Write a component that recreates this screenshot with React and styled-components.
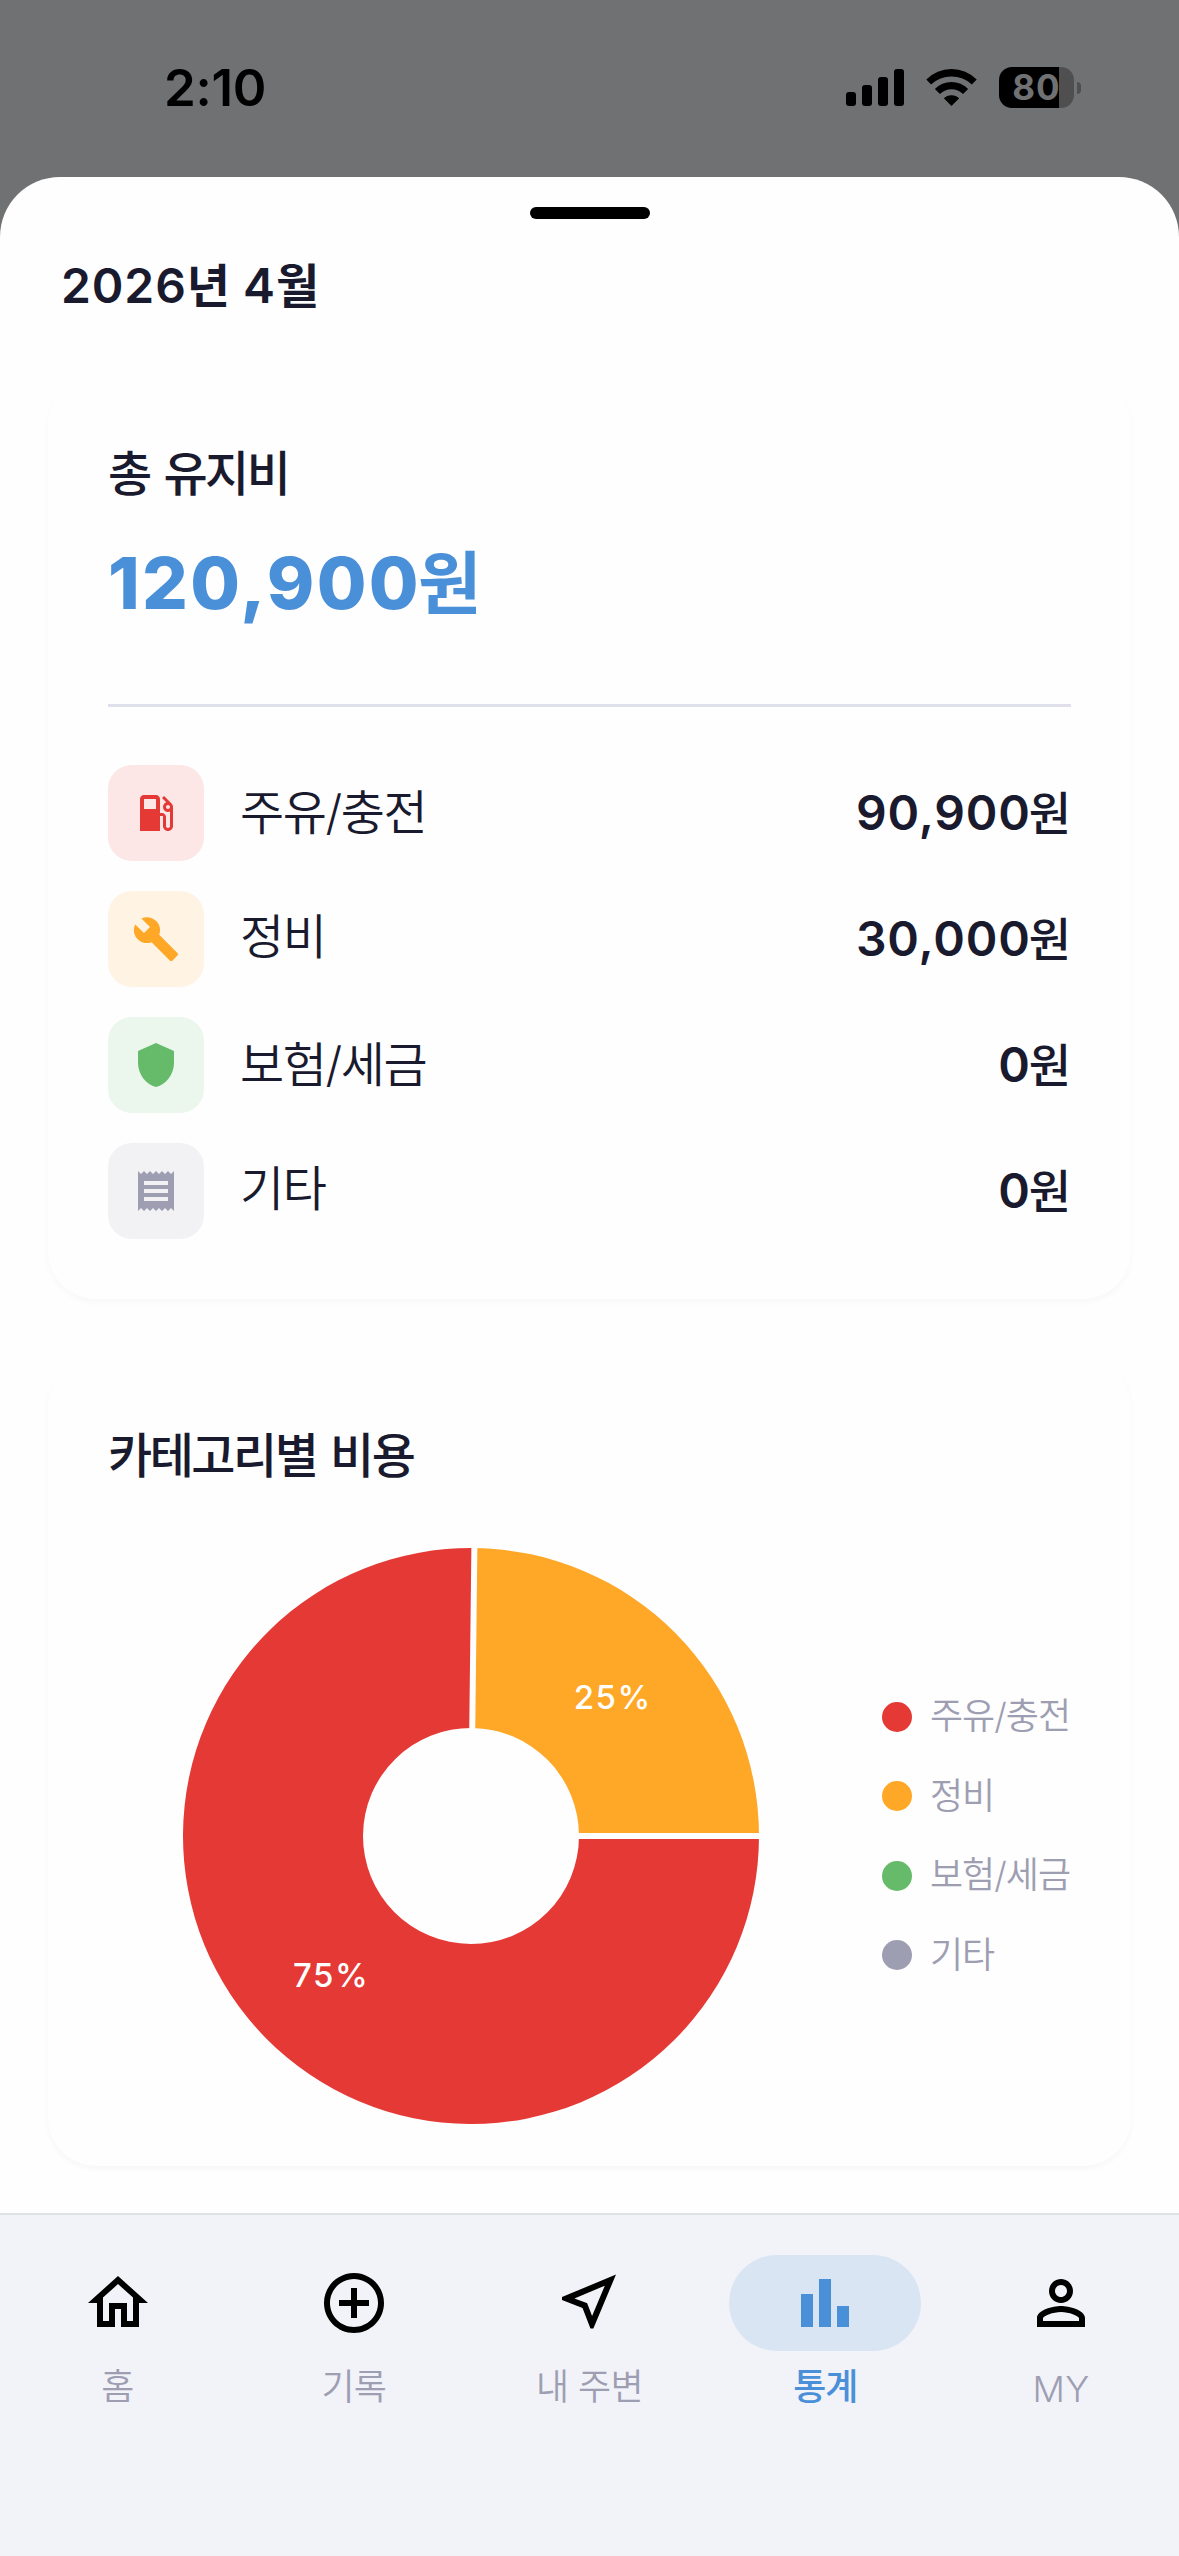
import React from 'react';
import styled, { createGlobalStyle } from 'styled-components';

const GlobalStyle = createGlobalStyle`
  *, *::before, *::after { box-sizing: border-box; }
  html, body { margin: 0; padding: 0; }
  body {
    font-family: Inter, "Noto Sans CJK KR", sans-serif;
    color: #1a1a2e;
    background: #707173;
  }
  svg { display: block; }
`;

const colors = {
  red: '#e53935',
  orange: '#ffa726',
  green: '#66bb6a',
  gray: '#9e9eb3',
  blue: '#4a90d9',
  surface: '#fefefe',
};

const Screen = styled.div`
  width: 1179px;
  height: 2556px;
  display: flex;
  flex-direction: column;
  background: #707173;
  overflow: hidden;
`;

/* ---------- status bar ---------- */

const StatusBar = styled.header`
  height: 177px;
  flex: none;
  display: flex;
  justify-content: space-between;
  align-items: flex-start;
  padding: 67px 98px 0 164px;
  color: #000;
`;

const Clock = styled.time`
  font-size: 51px;
  line-height: 42px;
  font-weight: 600;
  letter-spacing: -0.3px;
`;

const StatusIcons = styled.div`
  height: 41px;
  display: flex;
  align-items: center;
`;

const Signal = styled.div`
  display: flex;
  align-items: flex-end;
  gap: 6px;
  height: 37px;
  margin-right: 22px;
`;

const SignalBar = styled.span`
  width: 10px;
  height: ${(p) => p.$height}px;
  border-radius: 3px;
  background: #000;
`;

const Battery = styled.div`
  display: flex;
  align-items: center;
  gap: 3px;
  margin-left: 22px;
`;

const BatteryBody = styled.div`
  width: 75px;
  height: 41px;
  border-radius: 13px;
  background: linear-gradient(to right, #000 60px, #4f4f50 60px);
  display: flex;
  align-items: center;
  justify-content: center;
  color: #707173;
  font-size: 35px;
  line-height: 41px;
  font-weight: 700;
  letter-spacing: 1px;
`;

const BatteryCap = styled.span`
  width: 4px;
  height: 12px;
  border-radius: 0 4px 4px 0;
  background: #4f4f50;
`;

/* ---------- sheet ---------- */

const Sheet = styled.main`
  flex: 1;
  min-height: 0;
  display: flex;
  flex-direction: column;
  border-radius: 60px 60px 0 0;
  background: ${colors.surface};
  overflow: hidden;
`;

const Handle = styled.div`
  width: 120px;
  height: 12px;
  margin: 30px auto 0;
  flex: none;
  border-radius: 6px;
  background: #000;
`;

const MonthTitle = styled.h1`
  margin: 37px 0 61px 61px;
  font-size: 48px;
  line-height: 60px;
  font-weight: 600;
  letter-spacing: 0.9px;
`;

const Cards = styled.div`
  display: flex;
  flex-direction: column;
  gap: 60px;
  padding: 0 48px;
`;

const Card = styled.section`
  display: flex;
  flex-direction: column;
  padding: 67px 60px ${(p) => p.$bottom}px;
  border-radius: 48px;
  background: ${colors.surface};
  box-shadow: 0 3px 6px rgba(0, 0, 0, 0.03);
`;

const CardTitle = styled.h2`
  margin: 0;
  font-size: 48px;
  line-height: 60px;
  font-weight: 500;
  letter-spacing: -2.5px;
  word-spacing: 3.5px;
`;

const Total = styled.p`
  margin: 34px 0 0;
  font-size: 72px;
  line-height: 90px;
  font-weight: 800;
  letter-spacing: 2.3px;
  color: ${colors.blue};
`;

const Divider = styled.hr`
  width: 100%;
  height: 3px;
  margin: 76px 0 58px;
  border: 0;
  background: #e0e0ec;
`;

const Rows = styled.ul`
  margin: 0;
  padding: 0;
  list-style: none;
  display: flex;
  flex-direction: column;
  gap: 30px;
`;

const Row = styled.li`
  display: flex;
  align-items: center;
  height: 96px;
`;

const IconTile = styled.span`
  width: 96px;
  height: 96px;
  border-radius: 24px;
  display: flex;
  align-items: center;
  justify-content: center;
  color: ${(p) => p.$color};
  background: ${(p) => p.$bg};
`;

const RowLabel = styled.span`
  flex: 1;
  margin-left: 36px;
  padding-bottom: ${(p) => p.$raise}px;
  font-size: 48px;
  line-height: 60px;
  font-weight: 350;
  letter-spacing: -1.4px;
`;

const Amount = styled.span`
  font-size: 48px;
  line-height: 60px;
  font-weight: 600;
  letter-spacing: 0.8px;
`;

const Unit = styled.span`
  margin-left: ${(p) => p.$shift || 0}px;
  font-size: ${(p) => p.$size}px;
  line-height: 0;
  font-weight: ${(p) => p.$weight};
  letter-spacing: 0;
`;

/* ---------- chart ---------- */

const ChartArea = styled.div`
  display: flex;
  align-items: center;
  justify-content: space-between;
  margin-top: 62px;
  padding-left: 75px;
`;

const Legend = styled.ul`
  margin: 0;
  padding: 0;
  width: 189px;
  list-style: none;
  display: flex;
  flex-direction: column;
`;

const LegendItem = styled.li`
  display: flex;
  align-items: center;
  gap: 18px;
  height: 79.5px;
  white-space: nowrap;
  font-size: 36px;
  line-height: 45px;
  font-weight: 350;
  letter-spacing: -1px;
  color: ${colors.gray};
`;

const Dot = styled.span`
  width: 30px;
  height: 30px;
  flex: none;
  border-radius: 50%;
  background: ${(p) => p.$color};
`;

const SliceLabel = styled.text`
  font-size: 33px;
  font-weight: 500;
  letter-spacing: 1.6px;
  fill: #fff;
  text-anchor: middle;
`;

/* ---------- bottom navigation ---------- */

const NavBar = styled.nav`
  height: 343px;
  flex: none;
  display: grid;
  grid-template-columns: repeat(5, 1fr);
  padding-top: 40px;
  border-top: 2px solid #e0e1e4;
  background: #f2f3f8;
`;

const NavItem = styled.a`
  display: flex;
  flex-direction: column;
  align-items: center;
  gap: ${(p) => p.$gap || 14}px;
  font-size: 36px;
  line-height: 45px;
  letter-spacing: ${(p) => p.$spacing}px;
  font-weight: ${(p) => (p.$active ? 500 : p.$weight || 350)};
  color: ${(p) => (p.$active ? colors.blue : colors.gray)};
`;

const NavPill = styled.span`
  width: 192px;
  height: 96px;
  border-radius: 48px;
  display: flex;
  align-items: center;
  justify-content: center;
  color: ${(p) => (p.$active ? colors.blue : '#000')};
  background: ${(p) => (p.$active ? '#d9e5f3' : 'transparent')};
`;

const paths = {
  fuel: 'M19.77 7.23l.01-.01-3.72-3.72L15 4.56l2.11 2.11c-.94.36-1.61 1.26-1.61 2.33 0 1.38 1.12 2.5 2.5 2.5.36 0 .69-.08 1-.21v7.21c0 .55-.45 1-1 1s-1-.45-1-1V14c0-1.1-.9-2-2-2h-1V5c0-1.1-.9-2-2-2H6c-1.1 0-2 .9-2 2v16h10v-7.5h1.5v5c0 1.38 1.12 2.5 2.5 2.5s2.5-1.12 2.5-2.5V9c0-.69-.28-1.32-.73-1.77zM12 10H6V5h6v5zm6 0c-.55 0-1-.45-1-1s.45-1 1-1 1 .45 1 1-.45 1-1 1z',
  wrench: 'M22.7 19l-9.1-9.1c.9-2.3.4-5-1.5-6.9-2-2-5-2.4-7.4-1.3L9 6 6 9 1.6 4.7C.4 7.1.9 10.1 2.9 12.1c1.9 1.9 4.6 2.4 6.9 1.5l9.1 9.1c.4.4 1 .4 1.4 0l2.3-2.3c.5-.4.5-1.1.1-1.4z',
  shield: 'M12 1L3 5v6c0 5.55 3.84 10.74 9 12 5.16-1.26 9-6.45 9-12V5l-9-4z',
  receipt: 'M18 17H6v-2h12v2zm0-4H6v-2h12v2zm0-4H6V7h12v2zM3 22l1.5-1.5L6 22l1.5-1.5L9 22l1.5-1.5L12 22l1.5-1.5L15 22l1.5-1.5L18 22l1.5-1.5L21 22V2l-1.5 1.5L18 2l-1.5 1.5L15 2l-1.5 1.5L12 2l-1.5 1.5L9 2 7.5 3.5 6 2 4.5 3.5 3 2v20z',
  home: 'M12 5.69l5 4.5V18h-2v-6H9v6H7v-7.81l5-4.5M12 3L2 12h3v8h6v-6h2v6h6v-8h3L12 3z',
  add: 'M13 7h-2v4H7v2h4v4h2v-4h4v-2h-4V7zm-1-5C6.48 2 2 6.48 2 12s4.48 10 10 10 10-4.48 10-10S17.52 2 12 2zm0 18c-4.41 0-8-3.59-8-8s3.59-8 8-8 8 3.59 8 8-3.59 8-8 8z',
  near: 'M17.27 6.23l-4.24 10.13-1.32-3.42-.32-.83-.82-.32-3.43-1.33 10.13-4.23M21 2.5L3 10.03v.98l6.84 2.65L12.48 20.5h.98L21 2.5z',
  chart: 'M4 9h4v11H4zM10 4h4v16h-4zM16 13h4v7h-4z',
  person: 'M12 6c1.1 0 2 .9 2 2s-.9 2-2 2-2-.9-2-2 .9-2 2-2m0-2C9.79 4 8 5.79 8 8s1.79 4 4 4 4-1.79 4-4-1.79-4-4-4zm0 9c-2.67 0-8 1.34-8 4v3h16v-3c0-2.66-5.33-4-8-4zm6 5H6v-.99c.2-.72 3.3-2.01 6-2.01s5.8 1.29 6 2v1z',
};

const Icon = ({ name, size }) => (
  <svg width={size} height={size} viewBox="0 0 24 24" fill="currentColor" aria-hidden="true">
    <path d={paths[name]} />
  </svg>
);

const Wifi = () => (
  <svg width="51" height="37" viewBox="0 0 50 37" preserveAspectRatio="none" aria-hidden="true">
    <path d="M0.3 10.5A34.3 34.3 0 0 1 49.7 10.5L45 15.5A29 29 0 0 0 5 15.5Z" />
    <path d="M8.7 20A22.5 22.5 0 0 1 41.3 20L36.3 25A16 16 0 0 0 13.7 25Z" />
    <path d="M17.5 29.3A10.5 10.5 0 0 1 32.5 29.3L25 37Z" />
  </svg>
);

const categories = [
  { label: '주유/충전', icon: 'fuel', color: colors.red, bg: '#fce6e6', value: 90900, raise: 0 },
  { label: '정비', icon: 'wrench', color: colors.orange, bg: '#fff3e4', value: 30000, raise: 4 },
  { label: '보험/세금', icon: 'shield', color: colors.green, bg: '#ebf6ed', value: 0, raise: 0 },
  { label: '기타', icon: 'receipt', color: colors.gray, bg: '#f2f2f5', value: 0, raise: 4 },
];

const tabs = [
  { label: '홈', icon: 'home', spacing: 0 },
  { label: '기록', icon: 'add', spacing: -0.8 },
  { label: '내 주변', icon: 'near', spacing: -0.6 },
  { label: '통계', icon: 'chart', spacing: -1, active: true },
  { label: 'MY', icon: 'person', spacing: 0.3, gap: 16, weight: 300 },
];

const total = categories.reduce((sum, c) => sum + c.value, 0);

const CENTER = 288;
const OUTER = 288;
const INNER = 108;
const point = (r, a) => [CENTER + r * Math.cos(a), CENTER + r * Math.sin(a)];

function DonutChart() {
  let angle = 0;
  const slices = categories
    .filter((c) => c.value > 0)
    .map((c) => {
      const start = angle;
      angle += (c.value / total) * Math.PI * 2;
      return { ...c, start, end: angle, mid: (start + angle) / 2 };
    });

  return (
    <svg width="576" height="576" viewBox="0 0 576 576">
      {slices.map((s) => {
        const large = s.end - s.start > Math.PI ? 1 : 0;
        const d = [
          `M${point(OUTER, s.start)}`,
          `A${OUTER} ${OUTER} 0 ${large} 1 ${point(OUTER, s.end)}`,
          `L${point(INNER, s.end)}`,
          `A${INNER} ${INNER} 0 ${large} 0 ${point(INNER, s.start)}Z`,
        ].join('');
        return <path key={s.label} d={d} fill={s.color} />;
      })}
      {slices.map((s) => {
        const [x1, y1] = point(INNER - 2, s.start);
        const [x2, y2] = point(OUTER + 2, s.start);
        return (
          <line key={s.label} x1={x1} y1={y1} x2={x2} y2={y2} stroke={colors.surface} strokeWidth="6" />
        );
      })}
      {slices.map((s) => {
        const [x, y] = point((OUTER + INNER) / 2, s.mid);
        return (
          <SliceLabel key={s.label} x={x + 1} y={y + 12}>
            {Math.round((s.value / total) * 100)}%
          </SliceLabel>
        );
      })}
    </svg>
  );
}

export default function App() {
  return (
    <Screen>
      <GlobalStyle />
      <StatusBar>
        <Clock>2:10</Clock>
        <StatusIcons>
          <Signal>
            {[14, 21, 29, 37].map((h) => (
              <SignalBar key={h} $height={h} />
            ))}
          </Signal>
          <Wifi />
          <Battery>
            <BatteryBody>80</BatteryBody>
            <BatteryCap />
          </Battery>
        </StatusIcons>
      </StatusBar>

      <Sheet>
        <Handle />
        <MonthTitle>
          2026<Unit $weight={600} $size={47}>년</Unit> 4<Unit $weight={600} $size={47}>월</Unit>
        </MonthTitle>
        <Cards>
          <Card $bottom={60}>
            <CardTitle>총 유지비</CardTitle>
            <Total>
              {total.toLocaleString('en-US')}
              <Unit $weight={700} $size={69} $shift={-3}>원</Unit>
            </Total>
            <Divider />
            <Rows>
              {categories.map((c) => (
                <Row key={c.label}>
                  <IconTile $color={c.color} $bg={c.bg}>
                    <Icon name={c.icon} size={48} />
                  </IconTile>
                  <RowLabel $raise={c.raise}>{c.label}</RowLabel>
                  <Amount>
                    {c.value.toLocaleString('en-US')}
                    <Unit $weight={500} $size={46} $shift={-2}>원</Unit>
                  </Amount>
                </Row>
              ))}
            </Rows>
          </Card>

          <Card $bottom={42}>
            <CardTitle>카테고리별 비용</CardTitle>
            <ChartArea>
              <DonutChart />
              <Legend>
                {categories.map((c) => (
                  <LegendItem key={c.label}>
                    <Dot $color={c.color} />
                    {c.label}
                  </LegendItem>
                ))}
              </Legend>
            </ChartArea>
          </Card>
        </Cards>
      </Sheet>

      <NavBar>
        {tabs.map((t) => (
          <NavItem key={t.label} $active={t.active} $spacing={t.spacing} $gap={t.gap} $weight={t.weight}>
            <NavPill $active={t.active}>
              <Icon name={t.icon} size={72} />
            </NavPill>
            {t.label}
          </NavItem>
        ))}
      </NavBar>
    </Screen>
  );
}
